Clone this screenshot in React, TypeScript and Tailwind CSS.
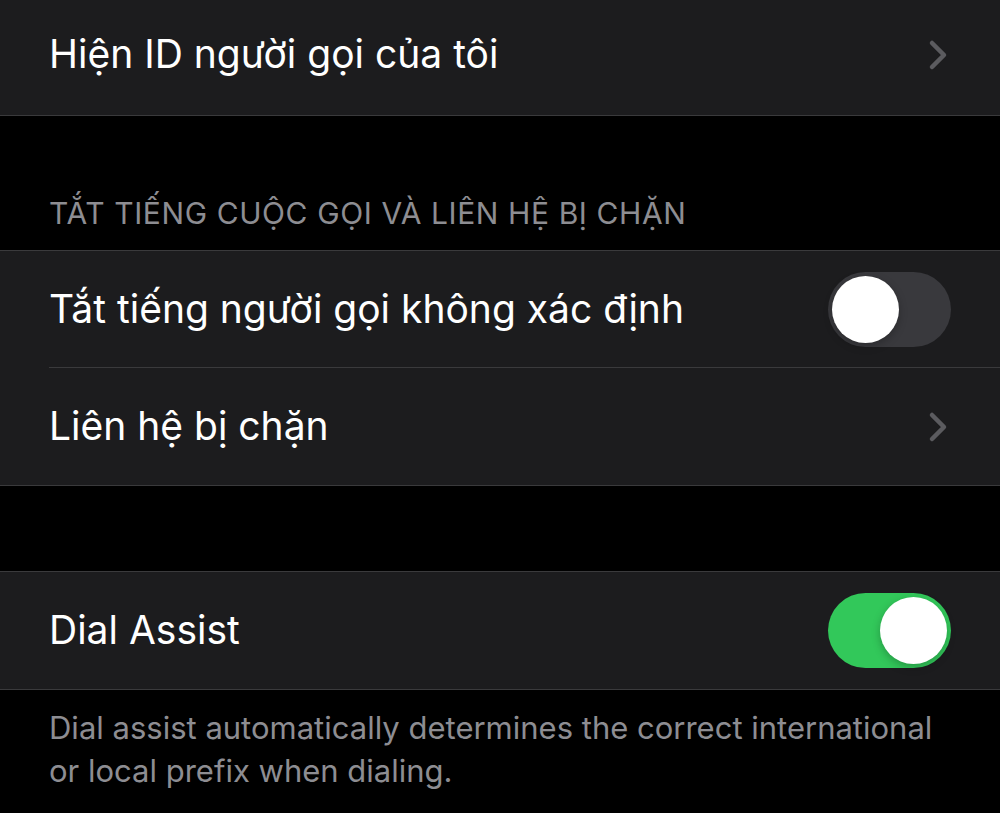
import { ReactNode } from "react";

const font = { fontFamily: "Inter, 'Noto Sans', sans-serif" };

function Chevron() {
  return (
    <svg width="22" height="32" viewBox="0 0 22 32" fill="none" className="mr-[50px]">
      <path
        d="M4 4l12 12-12 12"
        stroke="#5b5b5f"
        strokeWidth="4.5"
        strokeLinecap="round"
        strokeLinejoin="round"
      />
    </svg>
  );
}

function Toggle({ on }: { on: boolean }) {
  return (
    <div
      className={`mr-[49px] flex h-[75px] w-[123px] items-center rounded-full p-[4px] ${
        on ? "justify-end bg-[#32c85a]" : "justify-start bg-[#39393d]"
      }`}
    >
      <div className="h-[67px] w-[67px] rounded-full bg-white shadow-[0_3px_8px_rgba(0,0,0,0.25)]" />
    </div>
  );
}

function Row({
  label,
  right,
  height = "h-[117px]",
  divider = false,
}: {
  label: string;
  right: ReactNode;
  height?: string;
  divider?: boolean;
}) {
  return (
    <div className={`relative flex items-center justify-between pl-[49px] ${height}`}>
      <span className="text-[39px] text-white">{label}</span>
      {right}
      {divider && <div className="absolute bottom-0 left-[49px] right-0 h-px bg-[#3a3a3c]" />}
    </div>
  );
}

export default function App() {
  return (
    <div className="h-[813px] w-[1000px] overflow-hidden bg-black" style={font}>
      <div className="border-b border-[#3a3a3c] bg-[#1c1c1e]">
        <Row label="Hiện ID người gọi của tôi" right={<Chevron />} height="h-[115px] pb-[6px]" />
      </div>

      <div className="flex h-[134px] items-end pb-[14px] pl-[49px]">
        <span className="text-[30px] uppercase tracking-[0.6px] text-[#8d8d92]">
          Tắt tiếng cuộc gọi và liên hệ bị chặn
        </span>
      </div>

      <div className="border-y border-[#3a3a3c] bg-[#1c1c1e]">
        <Row label="Tắt tiếng người gọi không xác định" right={<Toggle on={false} />} divider />
        <Row label="Liên hệ bị chặn" right={<Chevron />} />
      </div>

      <div className="h-[85px]" />

      <div className="border-y border-[#3a3a3c] bg-[#1c1c1e]">
        <Row label="Dial Assist" right={<Toggle on />} />
      </div>

      <p className="pl-[49px] pr-[20px] pt-[16px] text-[31px] leading-[43px] text-[#8d8d92]">
        Dial assist automatically determines the correct international
        <br />
        or local prefix when dialing.
      </p>
    </div>
  );
}
